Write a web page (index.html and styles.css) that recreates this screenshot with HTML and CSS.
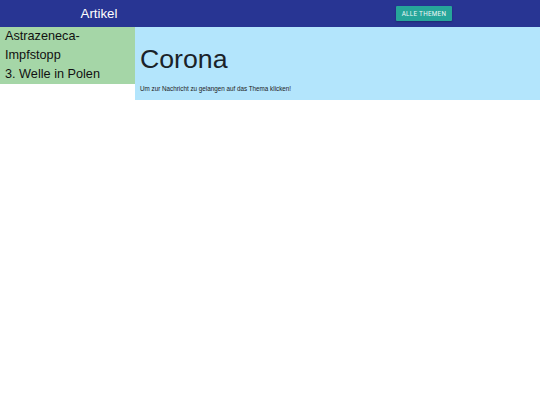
FILE: index.html
```html
<!DOCTYPE html>
<html lang="de">
<head>
<meta charset="utf-8">
<title>Artikel</title>
<link rel="stylesheet" href="styles.css">
</head>
<body>
<header class="topbar">
  <div class="brand">Artikel</div>
  <div class="spacer"></div>
  <div class="actions"><button class="btn">ALLE THEMEN</button></div>
</header>
<main class="layout">
  <aside class="sidebar">
    <a class="item" href="#">Astrazeneca-Impfstopp</a>
    <a class="item" href="#">3. Welle in Polen</a>
  </aside>
  <section class="panel">
    <h1 class="title">Corona</h1>
    <p class="hint">Um zur Nachricht zu gelangen auf das Thema klicken!</p>
  </section>
</main>
</body>
</html>
```
FILE: styles.css
```css
html, body {
  margin: 0;
  padding: 0;
  background: #ffffff;
  font-family: "Liberation Sans", Arial, sans-serif;
}
.topbar {
  display: grid;
  grid-template-columns: 198px 198px auto;
  align-items: center;
  height: 27px;
  background: #283593;
}
.brand {
  color: #ffffff;
  font-size: 13.3px;
  text-align: center;
  line-height: 27px;
}
.actions {
  display: flex;
  align-items: center;
}
.btn {
  border: none;
  margin: 0;
  background: #26a69a;
  color: #eef8f7;
  font-family: "Roboto", "Liberation Sans", sans-serif;
  font-weight: 400;
  font-size: 6.3px;
  letter-spacing: 0.3px;
  height: 15px;
  width: 56px;
  padding: 0;
  box-shadow: 0 1px 2px rgba(0,0,0,0.25);
  border-radius: 1px;
}
.layout {
  display: flex;
  align-items: flex-start;
}
.sidebar {
  width: 135px;
  box-sizing: border-box;
  padding: 0 5px;
  background: #a5d6a7;
  display: flex;
  flex-direction: column;
}
.item {
  color: #111111;
  text-decoration: none;
  font-size: 12.7px;
  line-height: 19px;
}
.panel {
  flex: 1;
  background: #b3e5fc;
  padding: 16px 5px 7px;
}
.title {
  margin: 0;
  font-weight: normal;
  font-size: 26.7px;
  line-height: 32px;
  color: #1a2228;
}
.hint {
  margin: 10px 0 0;
  font-size: 6.3px;
  line-height: 8px;
  color: #222222;
}
```
